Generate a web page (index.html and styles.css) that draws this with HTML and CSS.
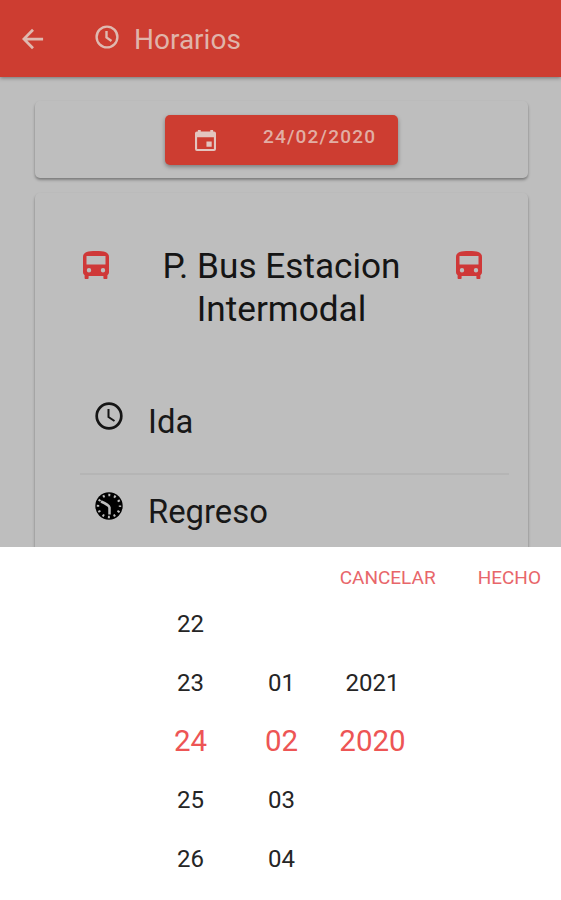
FILE: index.html
```
<!DOCTYPE html>
<html lang="es">
<head>
    <meta charset="UTF-8">
    <title>Horarios</title>
    <link rel="stylesheet" href="styles.css">
</head>
<body>

<div class="page">
    <header class="toolbar">
        <svg class="toolbar__back" viewBox="0 0 24 24"><path d="M23 12H2M12 2L2 12l10 10"/></svg>
        <svg class="toolbar__clock" viewBox="0 0 24 24"><circle cx="12" cy="12" r="10.4"/><path d="M11.5 6v6.5l5 3.500"/></svg>
        <h1 class="toolbar__title">Horarios</h1>
    </header>

    <main class="content">
        <section class="card card--date">
            <button class="date-button">
                <svg class="date-button__icon" viewBox="0 0 22 22"><path fill-rule="evenodd" d="M3 0h3v1.500h10V0h3v1.500h1a2 2 0 0 1 2 2V20a2 2 0 0 1-2 2H2a2 2 0 0 1-2-2V3.500a2 2 0 0 1 2-2h1zM2.200 7.500v12.300h17.600V7.500zM12 12h5.500v5.500H12z"/></svg>
                <span class="date-button__text">24/02/2020</span>
            </button>
        </section>

        <section class="card card--route">
            <div class="route">
                <svg class="route__bus" viewBox="0 0 26 28"><path fill-rule="evenodd" d="M0 6C0 1.500 4 0 13 0s13 1.500 13 6v15c0 1.500-.7 2.500-1.600 3.200V27c0 .6-.4 1-1 1h-2c-.6 0-1-.4-1-1v-2H5.600v2c0 .6-.4 1-1 1h-2c-.6 0-1-.4-1-1v-2.800C.7 23.500 0 22.500 0 21zM3.500 5v8.500h19V5zM6 17a2.200 2.200 0 1 0 0 4.400 2.200 2.200 0 0 0 0-4.400zM20 17a2.200 2.200 0 1 0 0 4.400 2.200 2.200 0 0 0 0-4.400z"/></svg>
                <h2 class="route__name">P. Bus Estacion<br>Intermodal</h2>
                <svg class="route__bus" viewBox="0 0 26 28"><path fill-rule="evenodd" d="M0 6C0 1.500 4 0 13 0s13 1.500 13 6v15c0 1.500-.7 2.500-1.600 3.200V27c0 .6-.4 1-1 1h-2c-.6 0-1-.4-1-1v-2H5.600v2c0 .6-.4 1-1 1h-2c-.6 0-1-.4-1-1v-2.800C.7 23.500 0 22.500 0 21zM3.500 5v8.500h19V5zM6 17a2.200 2.200 0 1 0 0 4.400 2.200 2.200 0 0 0 0-4.400zM20 17a2.200 2.200 0 1 0 0 4.400 2.200 2.200 0 0 0 0-4.400z"/></svg>
            </div>
            <div class="trip trip--line">
                <svg class="trip__icon" viewBox="0 0 28 28"><circle class="stroke" cx="14" cy="14" r="12.300"/><path class="stroke thin" d="M13.500 7v8l6 4"/></svg>
                <span class="trip__label">Ida</span>
            </div>
            <div class="trip">
                <svg class="trip__icon" viewBox="0 0 28 28"><circle cx="14" cy="14" r="13.700"/><circle class="ticks" cx="14" cy="14" r="11"/><path class="hands" d="M14.500 22.500V15.500Q14 13 6 9.500"/></svg>
                <span class="trip__label">Regreso</span>
            </div>
        </section>
    </main>

    <div class="picker">
        <div class="picker__toolbar">
            <button class="picker__button picker__button--cancel">CANCELAR</button>
            <button class="picker__button">HECHO</button>
        </div>
        <div class="picker__columns">
            <div class="picker__col">
                <span>22</span>
                <span>23</span>
                <span class="selected">24</span>
                <span>25</span>
                <span>26</span>
            </div>
            <div class="picker__col">
                <span></span>
                <span>01</span>
                <span class="selected">02</span>
                <span>03</span>
                <span>04</span>
            </div>
            <div class="picker__col">
                <span></span>
                <span>2021</span>
                <span class="selected">2020</span>
            </div>
        </div>
    </div>
</div>

</body>
</html>
```
FILE: styles.css
```
*{
    box-sizing: border-box;
    margin:0;
    padding:0;
}
body{
    font-family: Roboto, "Liberation Sans", sans-serif;
    background:#bebebe;
}
button{
    border:0;
    background:none;
    font-family:inherit;
}
.page{
    width:561px;
    height:900px;
    display:flex;
    flex-direction:column;
    overflow:hidden;
}

/* header */
.toolbar{
    height:77px;
    flex:none;
    display:flex;
    align-items:center;
    padding-left:22px;
    background:#cd3d31;
    box-shadow:0 1px 4px rgba(0,0,0,.4);
    z-index:1;
}
.toolbar svg{
    fill:none;
    stroke:#dfb9b0;
}
.toolbar__back{
    width:22px;
    height:22px;
    stroke-width:3;
}
.toolbar__clock{
    width:24px;
    height:24px;
    margin:0 15px 4px 51px;
    stroke-width:2.4;
}
.toolbar__title{
    padding-top:2px;
    font-size:28px;
    font-weight:400;
    color:#e0b4aa;
}

/* cards */
.content{
    height:470px;
    flex:none;
    padding:24px 33px 0 35px;
    overflow:hidden;
}
.card{
    border-radius:5px;
    box-shadow:0 2px 3px rgba(0,0,0,.32), 0 1px 2px rgba(0,0,0,.06);
}
.card--date{
    height:77px;
    padding-top:14px;
    padding-left:130px;
}
.date-button{
    width:233px;
    height:50px;
    display:flex;
    padding:15px 0 0 30px;
    border-radius:5px;
    background:#cd3d31;
    box-shadow:0 2px 4px rgba(0,0,0,.35);
    color:#e2aea4;
}
.date-button__icon{
    width:21px;
    height:21px;
    fill:#e3c5bf;
}
.date-button__text{
    margin:-4px 0 0 47px;
    font-size:19px;
    line-height:22px;
    font-weight:500;
    letter-spacing:1.2px;
}
.card--route{
    height:420px;
    margin-top:15px;
    padding:51px 19px 0 45px;
}
.route{
    display:flex;
    justify-content:space-between;
    height:129px;
    padding:0 27px 0 3px;
}
.route__bus{
    width:26px;
    height:28px;
    margin-top:7px;
    fill:#cf3838;
}
.route__name{
    padding:1px 2px 0 0;
    font-size:35.2px;
    line-height:43px;
    font-weight:400;
    text-align:center;
    color:#151515;
}
.trip{
    height:90px;
    display:flex;
    padding:17px 0 0 15px;
}
.trip--line{
    height:102px;
    padding-top:28px;
    border-bottom:2px solid #b5b5b5;
}
.trip__icon{
    width:28px;
    height:28px;
    margin-right:25px;
}
.trip--line .trip__icon{
    margin-top:1px;
}
.trip__label{
    padding-top:2px;
    font-size:32.8px;
    line-height:38px;
    color:#181818;
}
.trip:last-child .trip__label{
    padding-top:1px;
}
.trip .stroke{
    fill:none;
    stroke:#151515;
    stroke-width:2.7;
}
.trip .thin{
    stroke-width:2;
}
.ticks{
    fill:none;
    stroke:#bebebe;
    stroke-width:2.4;
    stroke-dasharray:2 3.76;
    stroke-dashoffset:1;
}
.hands{
    fill:none;
    stroke:#bebebe;
    stroke-width:2.5;
}

/* date picker */
.picker{
    flex:1;
    background:#fff;
    z-index:1;
}
.picker__toolbar{
    height:48px;
    display:flex;
    justify-content:flex-end;
    padding:11px 20px 0 0;
}
.picker__button{
    height:38px;
    font-size:19px;
    color:#e8666a;
}
.picker__button--cancel{
    margin-right:42px;
}
.picker__columns{
    display:flex;
    padding-left:145px;
}
.picker__col{
    width:91px;
}
.picker__col span{
    height:58.7px;
    display:flex;
    align-items:center;
    justify-content:center;
    font-size:24px;
    color:#252525;
}
.picker__col .selected{
    padding-bottom:2px;
    font-size:29.5px;
    color:#ed5555;
}
```
